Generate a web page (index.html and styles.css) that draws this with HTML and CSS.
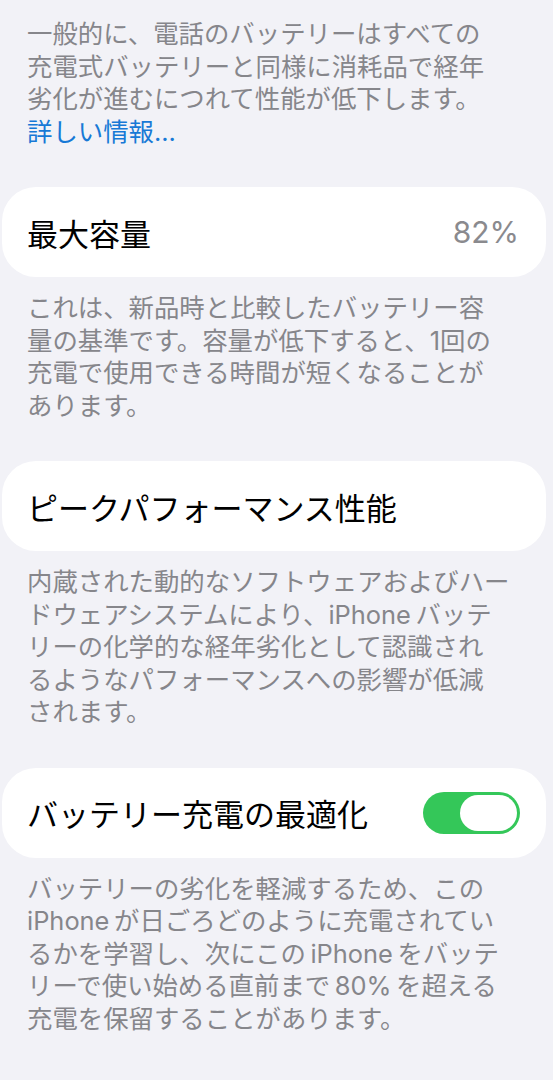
FILE: index.html
```html
<!DOCTYPE html>
<html lang="ja">
  <head>
    <meta charset="utf-8">
    <title>バッテリーの状態と充電</title>
    <meta name="viewport" content="width=device-width, initial-scale=1">
    <link rel="stylesheet" href="styles.css">
  </head>
  <body>
    <p class="note intro">
      一般的に、電話のバッテリーはすべての<br>
      充電式バッテリーと同様に消耗品で経年<br>
      劣化が進むにつれて性能が低下します。<br>
      <a href="#" class="more">詳しい情報...</a>
    </p>

    <div class="row">
      <span class="label">最大容量</span>
      <span class="value">82%</span>
    </div>
    <p class="note">
      これは、新品時と比較したバッテリー容<br>
      量の基準です。容量が低下すると、1回の<br>
      充電で使用できる時間が短くなることが<br>
      あります。
    </p>

    <div class="row">
      <span class="label">ピークパフォーマンス性能</span>
    </div>
    <p class="note">
      内蔵された動的なソフトウェアおよびハー<br>
      ドウェアシステムにより、iPhone&thinsp;バッテ<br>
      リーの化学的な経年劣化として認識され<br>
      るようなパフォーマンスへの影響が低減<br>
      されます。
    </p>

    <div class="row">
      <span class="label">バッテリー充電の最適化</span>
      <span class="switch on"><span class="knob"></span></span>
    </div>
    <p class="note">
      バッテリーの劣化を軽減するため、この<br>
      iPhone&thinsp;が日ごろどのように充電されてい<br>
      るかを学習し、次にこの&thinsp;iPhone&thinsp;をバッテ<br>
      リーで使い始める直前まで&thinsp;80%&thinsp;を超える<br>
      充電を保留することがあります。
    </p>
  </body>
</html>
```

FILE: styles.css
```css
body {
  margin: 0;
  background-color: #f2f2f7;
  font-family: "Inter", "Noto Sans CJK JP", sans-serif;
  -webkit-font-smoothing: antialiased;
}
.note {
  margin: 0;
  padding: 15px 10px 39px 27px;
  font-size: 25.4px;
  line-height: 32.5px;
  color: #86868b;
  white-space: nowrap;
}
.note.intro {
  padding-top: 18px;
}
a.more {
  color: #1779d6;
  text-decoration: none;
}
.row {
  display: flex;
  align-items: center;
  justify-content: space-between;
  height: 90px;
  margin: 0 7px 0 2px;
  padding: 0 27px 0 25px;
  background-color: #fff;
  border-radius: 34px;
}
.row .label {
  font-size: 31px;
  color: #000;
}
.row .value {
  font-size: 30px;
  color: #8a8a8e;
}
.switch {
  display: flex;
  justify-content: flex-end;
  box-sizing: border-box;
  width: 97px;
  height: 42px;
  padding: 3px;
  margin-right: -1px;
  border-radius: 21px;
  background-color: #34c759;
}
.switch .knob {
  width: 57px;
  height: 36px;
  border-radius: 18px;
  background-color: #fff;
}
```
